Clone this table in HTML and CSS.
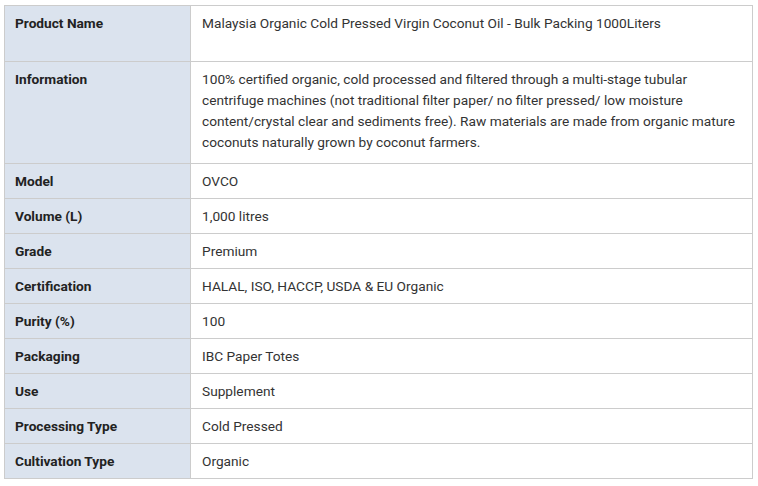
FILE: index.html
```html
<!DOCTYPE html>
<html>
<head>
<meta charset="utf-8">
<link rel="stylesheet" href="styles.css">
</head>
<body>
<div class="wrap">
<table class="specs">
<tbody>
<tr class="tall"><th>Product Name</th><td>Malaysia Organic Cold Pressed Virgin Coconut Oil - Bulk Packing 1000Liters</td></tr>
<tr class="info"><th>Information</th><td>100% certified organic, cold processed and filtered through a multi-stage tubular centrifuge machines (not traditional filter paper/ no filter pressed/ low moisture content/crystal clear and sediments free). Raw materials are made from organic mature coconuts naturally grown by coconut farmers.</td></tr>
<tr><th>Model</th><td>OVCO</td></tr>
<tr><th>Volume (L)</th><td>1,000 litres</td></tr>
<tr><th>Grade</th><td>Premium</td></tr>
<tr><th>Certification</th><td>HALAL, ISO, HACCP, USDA &amp; EU Organic</td></tr>
<tr><th>Purity (%)</th><td>100</td></tr>
<tr><th>Packaging</th><td>IBC Paper Totes</td></tr>
<tr><th>Use</th><td>Supplement</td></tr>
<tr><th>Processing Type</th><td>Cold Pressed</td></tr>
<tr><th>Cultivation Type</th><td>Organic</td></tr>
</tbody>
</table>
</div>
</body>
</html>
```

FILE: styles.css
```css
html, body {
  margin: 0;
  padding: 0;
  background: #fff;
}
.wrap {
  padding: 5px 0 0 4px;
}
.specs {
  width: 749px;
  border-collapse: collapse;
  font-family: Roboto, "Liberation Sans", sans-serif;
  font-size: 13.7px;
  line-height: 21px;
  color: #333;
}
.specs th,
.specs td {
  border: 1px solid #cccccc;
  padding: 7px 10px 6px;
  vertical-align: top;
  text-align: left;
}
.specs td {
  padding-left: 11px;
}
.specs th {
  width: 165px;
  background: #dbe3ee;
  font-weight: bold;
  color: #222;
}
.specs tr.tall th,
.specs tr.tall td {
  height: 42px;
}
.specs tr.info td {
  padding-bottom: 10px;
}
```
